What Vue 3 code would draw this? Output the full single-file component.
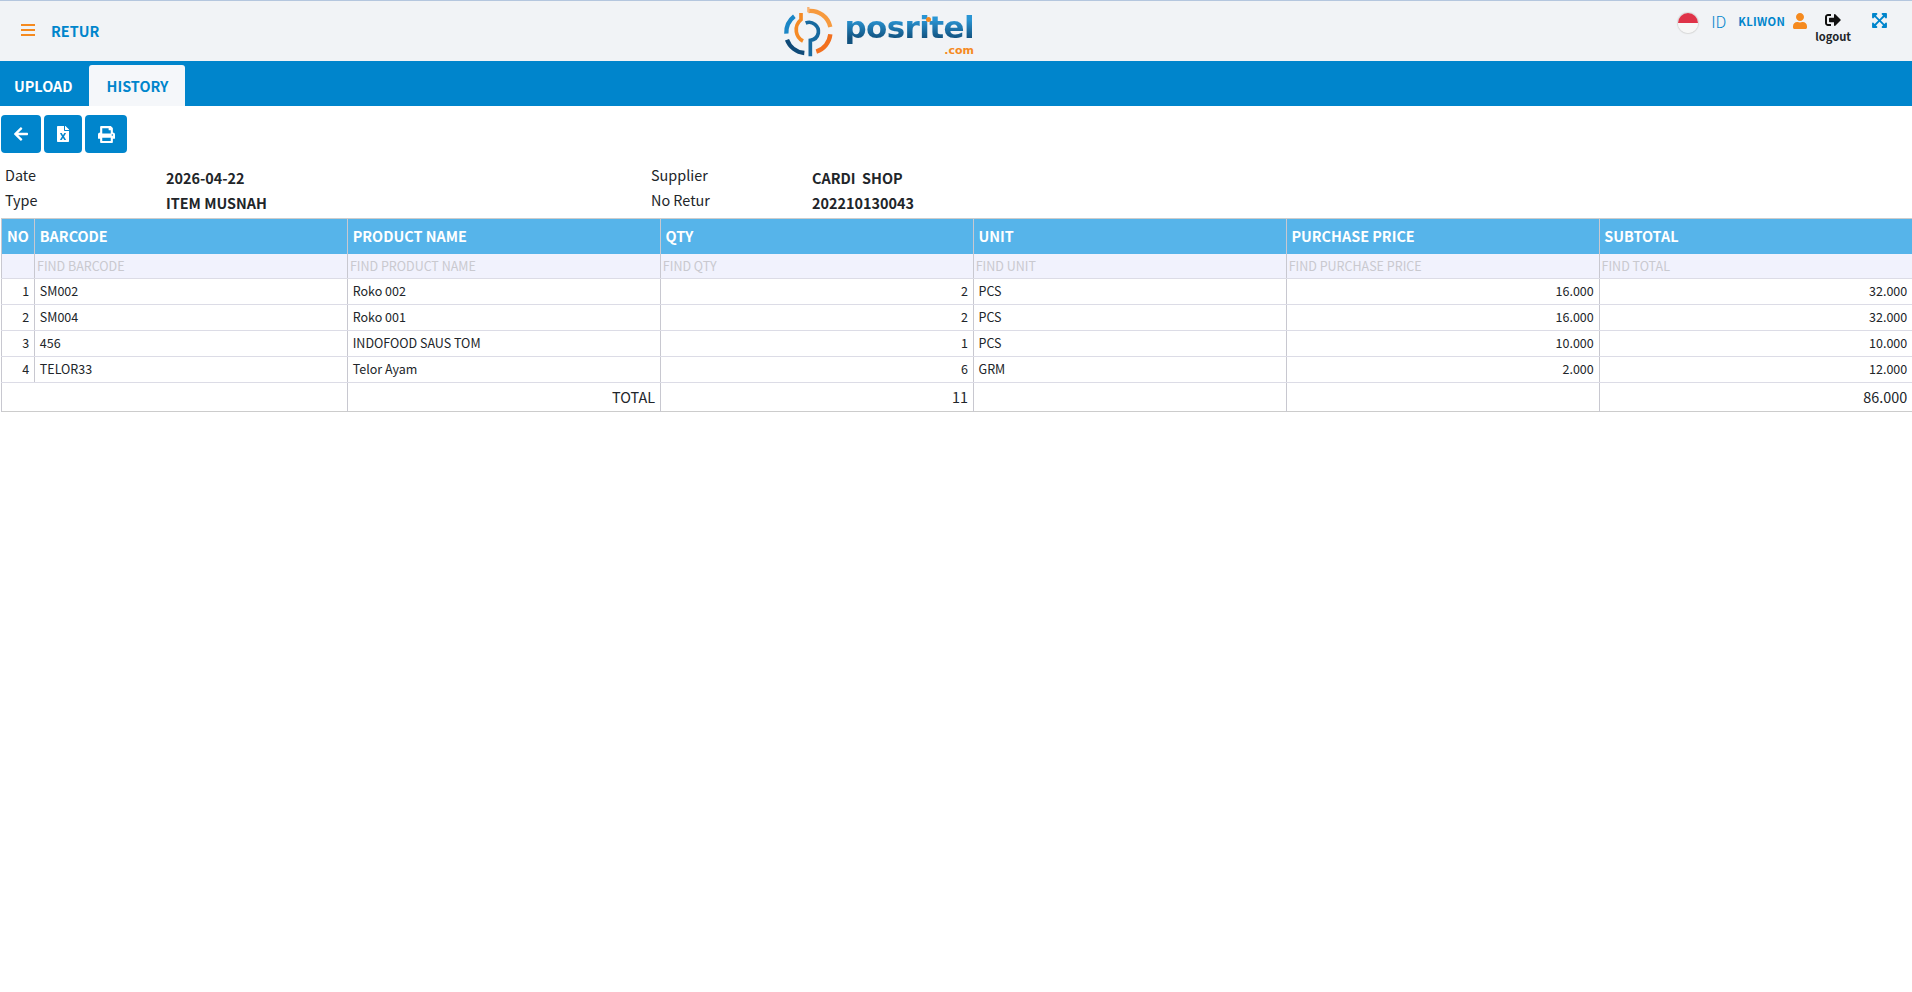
<template>
  <div class="page">
    <!-- top bar -->
    <header class="topbar">
      <div class="topbar-left">
        <svg class="bars" viewBox="0 0 14 12"><path d="M0 0h14v2H0zM0 5h14v2H0zM0 10h14v2H0z" /></svg>
        <span class="page-title">RETUR</span>
      </div>
      <div class="logo">
        <svg class="logo-mark" viewBox="66 12 156 156" fill="none">
          <path d="M100 46 A62 62 0 0 0 76 98" stroke="#1b86c6" stroke-width="13" />
          <path d="M78 116 A62 62 0 0 0 130 156" stroke="#0f4a78" stroke-width="13" />
          <path d="M142 30 A62 62 0 0 1 208 78" stroke="#f79a3e" stroke-width="13" />
          <path d="M208 100 A62 62 0 0 1 166 152" stroke="#f2701f" stroke-width="13" />
          <path d="M142 18 V34" stroke="#f9b271" stroke-width="7" />
          <path d="M120 36 V56 A40 40 0 0 0 106 92 A38 38 0 0 0 126 120" stroke="#f58a25" stroke-width="11" />
          <path d="M134 66 A28 28 0 0 1 172 96 A28 28 0 0 1 148 118 V166" stroke="#17699f" stroke-width="11" />
        </svg>
        <div class="logo-text">
          <span class="logo-word">posritel</span>
          <i class="logo-dot"></i>
          <span class="logo-com">.com</span>
        </div>
      </div>
      <div class="topbar-right">
        <span class="flag"></span>
        <span class="lang">ID</span>
        <span class="user-name">KLIWON</span>
        <svg class="user-icon" viewBox="0 0 448 512"><path d="M224 256c70.7 0 128-57.3 128-128S294.7 0 224 0 96 57.3 96 128s57.3 128 128 128zm89.6 32h-16.7c-22.2 10.2-46.9 16-72.9 16s-50.6-5.8-72.9-16h-16.7C60.2 288 0 348.2 0 422.4V464c0 26.5 21.5 48 48 48h352c26.5 0 48-21.5 48-48v-41.6c0-74.2-60.2-134.4-134.4-134.4z" /></svg>
        <div class="logout">
          <svg viewBox="0 0 512 512"><path d="M497 273L329 441c-15 15-41 4.5-41-17v-96H152c-13.3 0-24-10.7-24-24v-96c0-13.3 10.7-24 24-24h136V88c0-21.4 25.9-32 41-17l168 168c9.3 9.4 9.3 24.6 0 34zM192 436v-40c0-6.6-5.4-12-12-12H96c-17.7 0-32-14.3-32-32V160c0-17.7 14.3-32 32-32h84c6.6 0 12-5.4 12-12V76c0-6.6-5.4-12-12-12H96c-53 0-96 43-96 96v192c0 53 43 96 96 96h84c6.6 0 12-5.4 12-12z" /></svg>
          <span>logout</span>
        </div>
        <svg class="expand" viewBox="0 0 448 512"><path d="M448 344v112a23.94 23.94 0 0 1-24 24H312c-21.39 0-32.09-25.9-17-41l36.2-36.2L224 295.6 116.77 402.9 153 439c15.09 15.1 4.39 41-17 41H24a23.94 23.94 0 0 1-24-24V344c0-21.4 25.89-32.1 41-17l36.19 36.2L184.46 256 77.18 148.7 41 185c-15.1 15.1-41 4.4-41-17V56a23.94 23.94 0 0 1 24-24h112c21.39 0 32.09 25.9 17 41l-36.2 36.2L224 216.4l107.23-107.3L295 73c-15.09-15.1-4.39-41 17-41h112a23.94 23.94 0 0 1 24 24v112c0 21.4-25.89 32.1-41 17l-36.19-36.2L263.54 256l107.28 107.3L407 327.1c15.1-15.2 41-4.5 41 16.9z" /></svg>
      </div>
    </header>

    <!-- tabs -->
    <nav class="tabs">
      <a class="tab">UPLOAD</a>
      <a class="tab active">HISTORY</a>
    </nav>

    <!-- actions -->
    <div class="actions">
      <button class="btn btn-back">
        <svg viewBox="0 0 448 512"><path d="M257.5 445.1l-22.2 22.2c-9.4 9.4-24.6 9.4-33.9 0L7 273c-9.4-9.4-9.4-24.6 0-33.9L201.4 44.7c9.4-9.4 24.6-9.4 33.9 0l22.2 22.2c9.5 9.5 9.3 25-.4 34.3L136.6 216H424c13.3 0 24 10.7 24 24v32c0 13.3-10.7 24-24 24H136.6l120.5 114.8c9.8 9.3 10 24.8.4 34.3z" /></svg>
      </button>
      <button class="btn btn-excel">
        <svg viewBox="0 0 384 512"><path d="M224 136V0H24C10.7 0 0 10.7 0 24v464c0 13.3 10.7 24 24 24h336c13.3 0 24-10.7 24-24V160H248c-13.2 0-24-10.8-24-24zm60.1 106.5L224 336l60.1 93.5c5.1 8-.6 18.5-10.1 18.5h-34.9c-4.4 0-8.5-2.4-10.6-6.3C208.9 405.5 192 373 192 373c-6.4 14.8-10 20-36.6 68.8-2.1 3.9-6.1 6.3-10.5 6.3H110c-9.5 0-15.2-10.5-10.1-18.5l60.3-93.5-60.3-93.5c-5.2-8 .6-18.5 10.1-18.5h34.8c4.4 0 8.5 2.4 10.6 6.3 26.1 48.8 20 33.6 36.6 68.5 0 0 6.1-11.7 36.6-68.5 2.1-3.9 6.2-6.3 10.6-6.3H274c9.5-.1 15.2 10.4 10.1 18.4zM384 121.9v6.1H256V0h6.1c6.4 0 12.5 2.5 17 7l97.9 98c4.5 4.5 7 10.6 7 16.9z" /></svg>
      </button>
      <button class="btn btn-print">
        <svg viewBox="0 0 512 512"><path d="M448 192V77.25c0-8.49-3.37-16.62-9.37-22.63L393.37 9.37c-6-6-14.14-9.37-22.63-9.37H96C78.33 0 64 14.33 64 32v160c-35.35 0-64 28.65-64 64v112c0 8.84 7.16 16 16 16h48v96c0 17.67 14.33 32 32 32h320c17.67 0 32-14.33 32-32v-96h48c8.84 0 16-7.16 16-16V256c0-35.35-28.65-64-64-64zm-64 256H128v-96h256v96zm0-224H128V64h192v48c0 8.84 7.16 16 16 16h48v96zm48 72c-13.25 0-24-10.75-24-24 0-13.26 10.75-24 24-24s24 10.74 24 24c0 13.25-10.75 24-24 24z" /></svg>
      </button>
    </div>

    <!-- info -->
    <div class="info">
      <template v-for="item in info" :key="item.label">
        <div class="info-label">{{ item.label }}</div>
        <div class="info-value">{{ item.value }}</div>
      </template>
    </div>

    <!-- table -->
    <table class="grid">
      <colgroup>
        <col class="col-no" />
        <col v-for="n in 6" :key="n" />
      </colgroup>
      <thead>
        <tr class="head-row">
          <th class="no-head">NO</th>
          <th>BARCODE</th>
          <th>PRODUCT NAME</th>
          <th>QTY</th>
          <th>UNIT</th>
          <th>PURCHASE PRICE</th>
          <th>SUBTOTAL</th>
        </tr>
        <tr class="filter-row">
          <td></td>
          <td v-for="f in filters" :key="f">{{ f }}</td>
        </tr>
      </thead>
      <tbody>
        <tr v-for="(row, i) in rows" :key="row.barcode" class="data-row">
          <td class="num">{{ i + 1 }}</td>
          <td>{{ row.barcode }}</td>
          <td>{{ row.name }}</td>
          <td class="num">{{ row.qty }}</td>
          <td>{{ row.unit }}</td>
          <td class="num">{{ row.price }}</td>
          <td class="num">{{ row.subtotal }}</td>
        </tr>
        <tr class="total-row">
          <td colspan="2"></td>
          <td class="num">TOTAL</td>
          <td class="num">11</td>
          <td></td>
          <td></td>
          <td class="num">86.000</td>
        </tr>
      </tbody>
    </table>
  </div>
</template>

<script setup>
const info = [
  { label: 'Date', value: '2026-04-22' },
  { label: 'Supplier', value: 'CARDI\u00a0 SHOP' },
  { label: 'Type', value: 'ITEM MUSNAH' },
  { label: 'No Retur', value: '202210130043' }
]

const filters = [
  'FIND BARCODE',
  'FIND PRODUCT NAME',
  'FIND QTY',
  'FIND UNIT',
  'FIND PURCHASE PRICE',
  'FIND TOTAL'
]

const rows = [
  { barcode: 'SM002', name: 'Roko 002', qty: 2, unit: 'PCS', price: '16.000', subtotal: '32.000' },
  { barcode: 'SM004', name: 'Roko 001', qty: 2, unit: 'PCS', price: '16.000', subtotal: '32.000' },
  { barcode: '456', name: 'INDOFOOD SAUS TOM', qty: 1, unit: 'PCS', price: '10.000', subtotal: '10.000' },
  { barcode: 'TELOR33', name: 'Telor Ayam', qty: 6, unit: 'GRM', price: '2.000', subtotal: '12.000' }
]
</script>

<style>
html,
body {
  background: #fff;
}
</style>

<style scoped>
.page {
  font-family: "Noto Sans CJK SC", "Noto Sans", sans-serif;
  color: #212529;
  font-size: 14.4px;
}

/* top bar */
.topbar {
  height: 60px;
  border-top: 1px solid #b4c6de;
  background: #f1f3f6;
  display: flex;
  align-items: center;
}

.topbar-left {
  flex: 0 0 783px;
  display: flex;
  align-items: center;
  padding: 0 0 2px 21px;
  gap: 16px;
  box-sizing: border-box;
}

.bars {
  width: 14px;
  height: 12px;
  fill: #f58a1f;
}

.page-title {
  font-size: 14.4px;
  font-weight: 700;
  color: #0085cc;
}

.logo {
  display: flex;
  align-items: center;
  gap: 7px;
}

.logo-mark {
  width: 52px;
  height: 52px;
  flex: none;
}

.logo-text {
  position: relative;
  width: 132px;
  height: 46px;
  display: flex;
  flex-direction: column;
  align-items: flex-end;
}

.logo-word {
  font-family: "DejaVu Sans", sans-serif;
  font-size: 31px;
  font-weight: 700;
  line-height: 38px;
  letter-spacing: -0.6px;
  background: linear-gradient(#2a95d4 30%, #12527f 80%);
  -webkit-background-clip: text;
  background-clip: text;
  color: transparent;
}

.logo-dot {
  position: absolute;
  left: 84px;
  top: 9px;
  width: 5px;
  height: 5px;
  border-radius: 50%;
  background: #f58a1f;
}

.logo-com {
  font-family: "DejaVu Sans", sans-serif;
  font-size: 11px;
  font-weight: 700;
  line-height: 9px;
  color: #f58a1f;
}

.topbar-right {
  margin-left: auto;
  display: flex;
  align-items: flex-start;
  padding: 3px 25px 0 0;
  height: 51px;
  box-sizing: border-box;
}

.flag {
  width: 20px;
  height: 20px;
  border-radius: 50%;
  background: linear-gradient(#df3348 0 50%, #f7f7f7 50%);
  box-shadow: 0 0 1px 1px #d9d9d9;
  margin-top: 4.5px;
}

.lang {
  margin-left: 13px;
  font-size: 16px;
  line-height: 24px;
  font-weight: 300;
  color: #0085cc;
}

.user-name {
  margin-left: 12px;
  font-size: 11.2px;
  line-height: 24px;
  font-weight: 700;
  color: #0085cc;
  letter-spacing: 0.3px;
}

.user-icon {
  width: 14px;
  height: 16px;
  margin: 4.5px 0 0 8px;
  fill: #f58a1f;
}

.logout {
  margin-left: 8px;
  display: flex;
  flex-direction: column;
  align-items: center;
  font-size: 11.2px;
  font-weight: 700;
  line-height: 14px;
  padding-top: 3px;
}

.logout svg {
  width: 16px;
  height: 16px;
  fill: #111;
}

.logout span {
  margin-top: 1px;
}

.expand {
  width: 15px;
  height: 17px;
  margin: 3px 0 0 21px;
  fill: #0085cc;
}

/* tabs */
.tabs {
  height: 45px;
  background: #0085cc;
  display: flex;
  align-items: flex-end;
}

.tab {
  height: 41px;
  line-height: 42px;
  padding: 0 14px;
  font-size: 14.4px;
  font-weight: 700;
  color: #fff;
  border-radius: 3px 3px 0 0;
}

.tab.active {
  margin-left: 2px;
  padding: 0 17px 0 18px;
  color: #0085cc;
  background: #f5f7fa;
}

/* actions */
.actions {
  display: flex;
  gap: 3px;
  padding: 9px 0 0 1px;
}

.btn {
  height: 38px;
  border: 0;
  padding: 0;
  border-radius: 4px;
  background: #0085cc;
  display: flex;
  align-items: center;
  justify-content: center;
}

.btn svg {
  fill: #fff;
  height: 16px;
}

.btn-back {
  width: 40px;
}

.btn-excel {
  width: 38px;
}

.btn-print {
  width: 42px;
}

.btn-print svg {
  height: 17px;
}

/* info */
.info {
  display: grid;
  grid-template-columns: 161px 485px 161px 1fr;
  padding: 12px 0 0 5px;
  height: 53px;
  grid-auto-rows: 24.5px;
}

.info-label {
  font-size: 14.4px;
  line-height: 20px;
}

.info-value {
  font-size: 14.4px;
  line-height: 25px;
  font-weight: 700;
}

/* table */
.grid {
  width: 1911px;
  margin-left: 1px;
  border-collapse: collapse;
  table-layout: fixed;
  border-bottom: 1px solid #ccc;
}

.col-no {
  width: 33px;
}

th,
td {
  box-sizing: border-box;
  padding: 0 4.8px;
  white-space: nowrap;
  overflow: hidden;
  text-align: left;
  line-height: 18px;
  border-left: 1px solid #c8c8d0;
  border-bottom: 1px solid #dcdce6;
}

.head-row th {
  height: 35px;
  background: #56b4ea;
  color: #fff;
  font-size: 14.4px;
  font-weight: 700;
  border-top: 1px solid #ccc;
  border-bottom: 0;
}

.no-head {
  padding: 0 0 0 5px;
}

.filter-row td {
  height: 25px;
  padding: 0 2px;
  background: #f1f2fd;
  color: #c9c9cf;
  font-size: 12.5px;
}

.data-row td {
  height: 26px;
  padding-bottom: 1px;
  font-size: 12.5px;
}

.total-row td {
  height: 29px;
  font-size: 14.4px;
  border-bottom: 0;
}

td.num {
  text-align: right;
}
</style>
